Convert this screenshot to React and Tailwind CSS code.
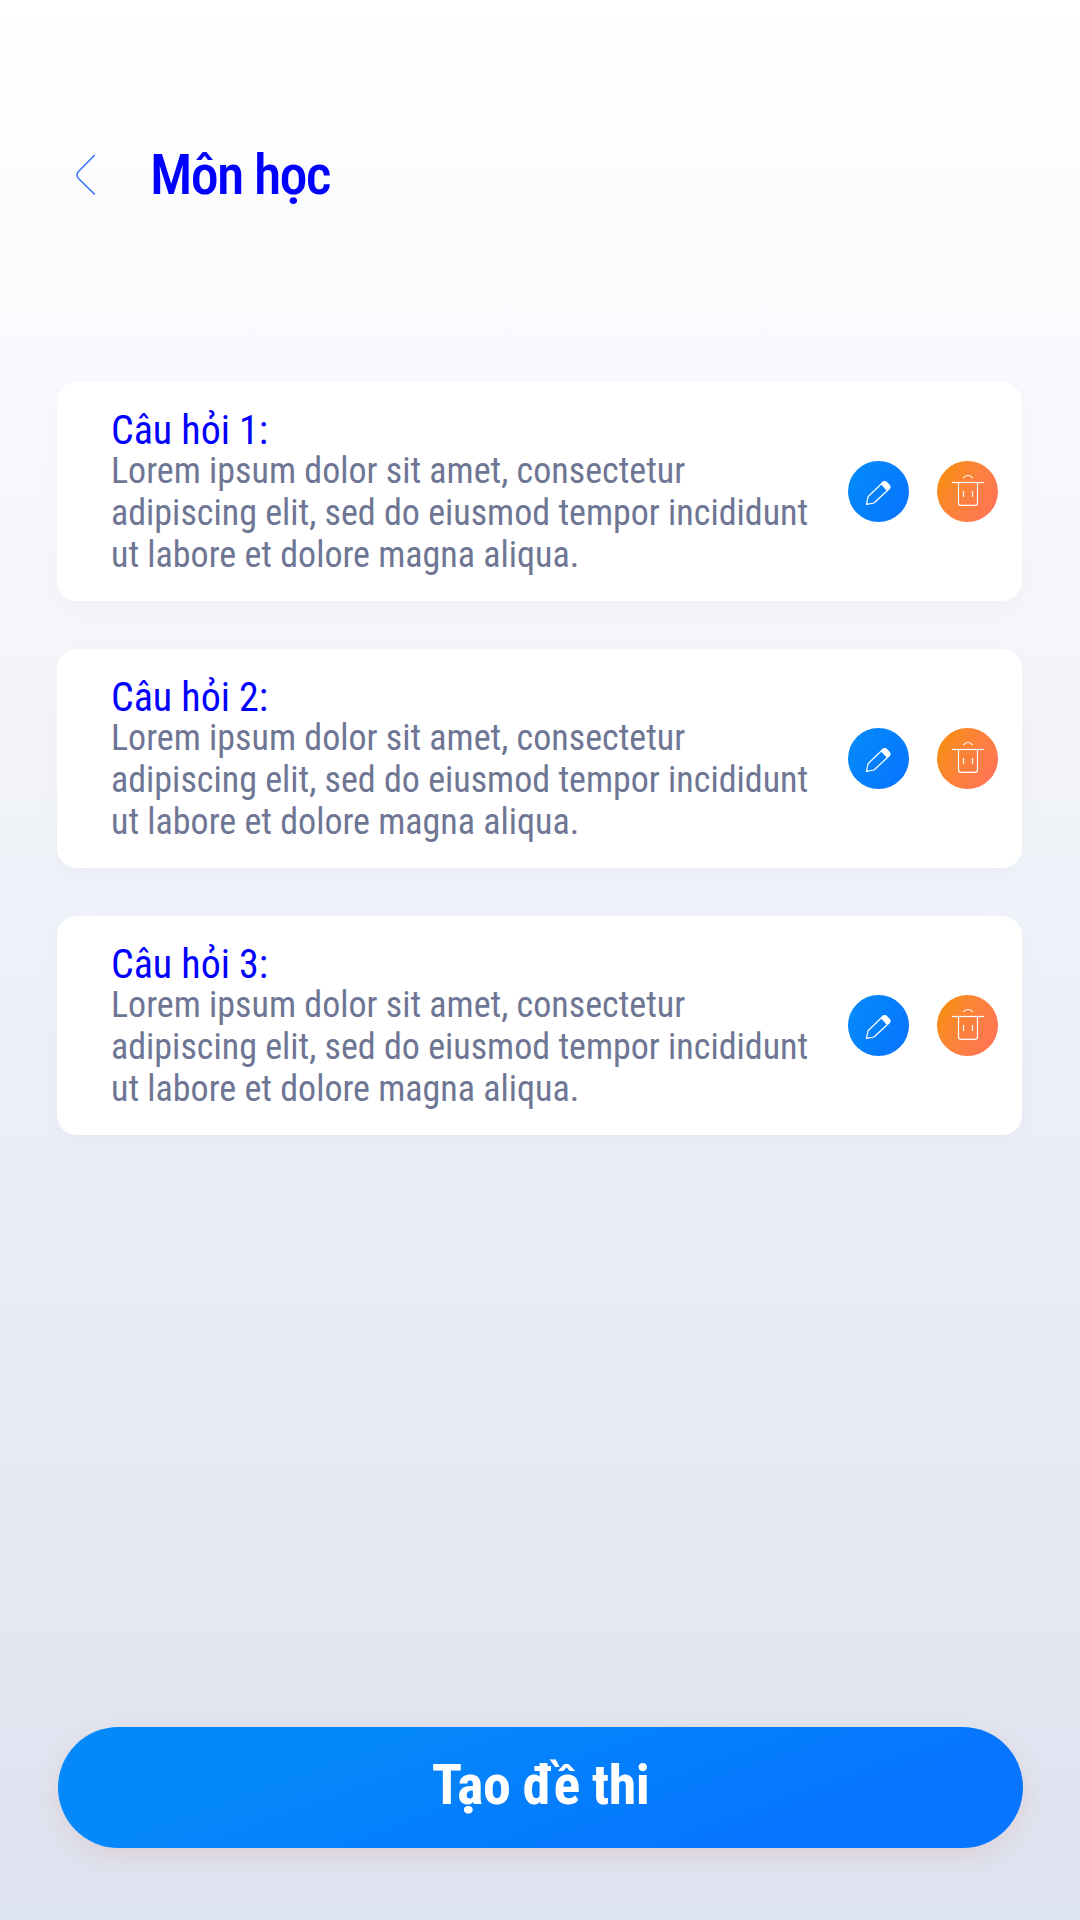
const questions = [1, 2, 3].map((n) => ({
  id: n,
  title: `Câu hỏi ${n}:`,
  body: "Lorem ipsum dolor sit amet, consectetur adipiscing elit, sed do eiusmod tempor incididunt ut labore et dolore magna aliqua.",
}));

function BackIcon() {
  return (
    <svg width="24" height="44" viewBox="0 0 24 44" fill="none" stroke="#2F6BFF" strokeWidth="1.4">
      <path d="M20.8 2 L4.5 18.5 Q1.5 22 4.5 25.5 L20.8 41.5" />
    </svg>
  );
}

function PencilIcon() {
  return (
    <svg width="61" height="61" viewBox="0 0 61 61" fill="none" stroke="#fff" strokeWidth="1.2" strokeLinejoin="round">
      <path d="M18.5 43.3 L20 35.8 L34.5 21.8 Q36.5 19.8 38.5 21.8 L41 24.3 Q42.7 26 41 28 L26 42 Z" />
      <path fill="#fff" d="M33.4 22.8 L35 21.2 Q36.7 19.8 38.3 21.2 L41.2 24.2 Q42.5 25.8 41.2 27.5 L39 29.2 Z" />
    </svg>
  );
}

function TrashIcon() {
  return (
    <svg width="61" height="61" viewBox="0 0 61 61" fill="none" stroke="#fff" strokeWidth="1.2">
      <path d="M15 21.5 H47" />
      <path d="M21.5 21.5 V42 Q21.5 44.4 24 44.4 H38 Q40.5 44.4 40.5 42 V21.5" />
      <path d="M26.5 30 V36 M35.5 30 V36" />
      <path d="M26.3 17 Q28 14.5 31 14.5 Q34 14.5 35.7 17" />
    </svg>
  );
}

function QuestionCard({ title, body }) {
  return (
    <article className="flex h-[219px] items-center rounded-[20px] bg-white pl-[54px] pr-6 shadow-[0_8px_24px_rgba(30,30,60,0.024)]">
      <div className="w-[720px] pt-[3px]">
        <h2 className="pt-px text-[40px] leading-[39px] text-[#0000FF]">{title}</h2>
        <p className="text-[36px] leading-[42px] text-[#6E7694]">{body}</p>
      </div>
      <div className="ml-auto flex gap-7">
        <button className="size-[61px] rounded-full bg-linear-120 from-[#058CFA] to-[#0A72FF]">
          <PencilIcon />
        </button>
        <button className="size-[61px] rounded-full bg-linear-120 from-[#F98B1C] from-20% to-[#FF7552] to-85%">
          <TrashIcon />
        </button>
      </div>
    </article>
  );
}

export default function App() {
  return (
    <main className="flex h-[1920px] w-[1080px] flex-col bg-linear-to-b from-white via-[#EBEEF7] via-60% to-[#DDE3EF] pl-[57px] pr-[58px] font-['Roboto_Condensed',Roboto,sans-serif]">
      <header className="flex h-[382px] items-start pt-[142px]">
        <button className="ml-[17px] mt-[11px] w-[76px]">
          <BackIcon />
        </button>
        <h1 className="text-[56px] leading-[66px] font-medium tracking-[-0.03em] text-[#0000FF]">Môn học</h1>
      </header>
      <section className="flex flex-col gap-12">
        {questions.map((q) => (
          <QuestionCard key={q.id} title={q.title} body={q.body} />
        ))}
      </section>
      <button className="mt-auto mb-[72px] ml-px -mr-px h-[121px] rounded-full bg-linear-160 from-[#0589FA] from-25% to-[#0775FF] to-75% pb-1.5 text-[56px] font-bold tracking-[-0.01em] text-white shadow-[0_8px_24px_rgba(220,100,80,0.15)]">
        Tạo đề thi
      </button>
    </main>
  );
}
